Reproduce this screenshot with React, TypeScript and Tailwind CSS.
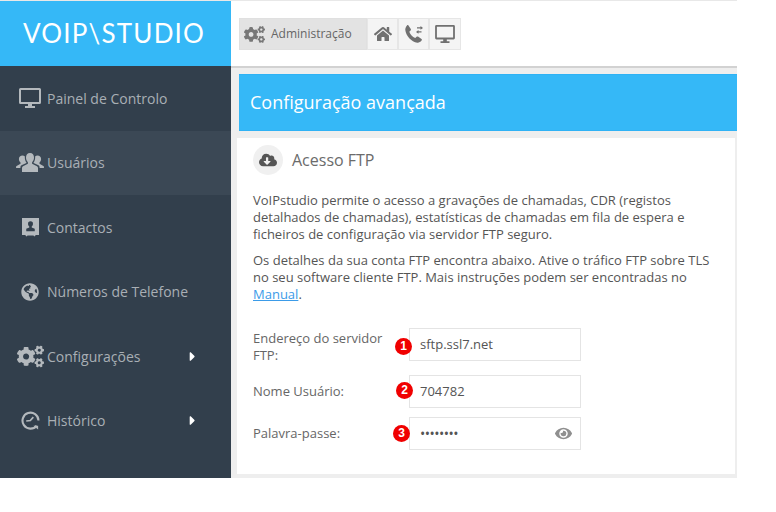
import { FaCogs, FaHome, FaGlobeAmericas, FaEye, FaCloudDownloadAlt, FaCaretRight } from "react-icons/fa";
import type { ReactNode } from "react";

function MonitorIcon({ className }: { className?: string }) {
  return (
    <svg viewBox="0 0 22 20" className={className} fill="currentColor">
      <path fillRule="evenodd" d="M1.5 0h19A1.5 1.5 0 0 1 22 1.5v13a1.5 1.5 0 0 1-1.5 1.5H13v2h3v2H6v-2h3v-2H1.5A1.5 1.5 0 0 1 0 14.5v-13A1.5 1.5 0 0 1 1.5 0zM2 2v12h18V2z" />
    </svg>
  );
}

function UsersIcon() {
  return (
    <svg viewBox="0 0 28 19" className="h-[19px] w-[28px]" fill="currentColor">
      <path d="M14 0c2.6 0 4 2 4 4.6 0 2-.8 3.6-1.9 4.6v1.6l4.9 2.5c.7.4 1 1 1 1.7V19H6v-4c0-.7.3-1.3 1-1.7l4.9-2.5V9.200C10.800 8.200 10 6.600 10 4.600 10 2 11.400 0 14 0z" />
      <path d="M6.500 2.500c1 0 1.800.4 2.400 1-.3 2 .2 4.300 1.500 6v.4L5.500 12.300C4.600 12.800 4.400 13.600 4.400 15H0l.2-1.800 4.300-2.400V9.600C3.500 8.700 2.900 7.500 2.900 6 2.900 3.900 4.400 2.500 6.500 2.500z" />
      <path d="M21.500 2.500c-1 0-1.800.4-2.400 1 .3 2-.2 4.300-1.500 6v.4l4.900 2.400c.9.500 1.100 1.300 1.100 2.700H28l-.2-1.800-4.300-2.400V9.600c1-.9 1.600-2.100 1.600-3.600 0-2.100-1.500-3.500-3.600-3.500z" />
    </svg>
  );
}

function ContactIcon() {
  return (
    <svg viewBox="0 0 18 20" className="h-[19px] w-[17px]" fill="currentColor">
      <path fillRule="evenodd" d="M0 0h18v18h-3.500l-1 1.600-1.500-1.200H6l-1.500 1.200-1-1.600H0zM9 3.500a2.600 2.600 0 0 0-2.600 2.800c0 1.200.6 2.100 1.300 2.600v1.200l-3.200 1.200V14h9v-2.700l-3.200-1.200V8.900c.7-.5 1.300-1.400 1.300-2.600A2.600 2.600 0 0 0 9 3.500z" />
    </svg>
  );
}

function HistoryIcon() {
  return (
    <svg viewBox="0 0 20 20" className="h-[19px] w-[19px]" fill="none" stroke="currentColor" strokeWidth="2.2">
      <path d="M16.500 15.500A8.400 8.400 0 1 1 18.400 10" />
      <path d="M5.500 10.500 9.800 10 13 6.500" strokeWidth="1.800" />
      <path d="M13 15.500h5v4z" fill="currentColor" stroke="none" />
    </svg>
  );
}

function PhoneArrowsIcon() {
  return (
    <svg viewBox="0 0 20 20" className="h-[20px] w-[20px]" fill="currentColor">
      <path d="M4.300 1.200 6.800 5c.3.500.2 1-.2 1.400L5.300 7.700c.9 2.600 3.200 5.100 5.900 6.300l1.400-1.300c.4-.4.900-.4 1.400-.1l3.500 2.500c.5.400.5 1 .1 1.500-1.200 1.500-2.700 2.400-4.300 2.200C7.400 18 1.800 11.700 1.300 6.100 1.100 4.300 1.900 2.700 3 1.400c.4-.5.900-.6 1.300-.2z" />
      <path d="M13 3.200h3.500V2l2.500 1.900-2.500 1.900V4.500H13zM17.500 7.200h-3V6L12 7.900l2.500 1.900V8.500h3z" />
    </svg>
  );
}

function NavItem({ icon, label, active, arrow }: { icon: ReactNode; label: string; active?: boolean; arrow?: boolean }) {
  return (
    <div className={`flex h-[64.5px] items-center whitespace-nowrap pl-[16px] text-[14px] text-[#a9afb5] ${active ? "bg-[#3b4855]" : ""}`}>
      <span className="flex w-[28px] shrink-0 items-center justify-center text-[#b4b9bd]">{icon}</span>
      <span className="ml-[3px] w-[138px]">{label}</span>
      {arrow && <FaCaretRight className="text-[15px] text-white" />}
    </div>
  );
}

function Badge({ n, className }: { n: number; className: string }) {
  return (
    <span className={`absolute flex h-[17px] w-[17px] items-center justify-center rounded-full bg-[#f00000] text-[12px] font-bold text-white [font-family:'Liberation_Sans',sans-serif] ${className}`}>
      {n}
    </span>
  );
}

function Field({ label, className, labelClassName, badge, children }: { label: ReactNode; className: string; labelClassName?: string; badge: ReactNode; children: ReactNode }) {
  return (
    <div className={`flex items-center ${className}`}>
      <div className={`w-[156px] ${labelClassName ?? ""}`}>{label}</div>
      <div className="relative flex h-[33px] w-[172px] items-center justify-between border border-[#e4e4e4] pl-[10px] pr-[8px] text-[#555555]">
        {badge}
        {children}
      </div>
    </div>
  );
}

export default function App() {
  return (
    <div className="h-[512px] w-[776px] overflow-hidden bg-white [font-family:'Open_Sans',sans-serif]">
      <div className="flex h-[478px] w-[737px] border-t border-t-[#e8e8e8]">
        <aside className="flex w-[231px] shrink-0 flex-col bg-[#323f4c]">
          <div className="flex h-[65px] items-center justify-center bg-[#35b8f7] pr-[3px] text-[26px] font-normal tracking-[1.2px] text-white [font-family:'Lato',sans-serif]">
            VOIP\STUDIO
          </div>
          <NavItem icon={<MonitorIcon className="h-[20px] w-[22px]" />} label="Painel de Controlo" />
          <NavItem icon={<UsersIcon />} label="Usuários" active />
          <NavItem icon={<ContactIcon />} label="Contactos" />
          <NavItem icon={<FaGlobeAmericas className="text-[18px]" />} label="Números de Telefone" />
          <NavItem icon={<FaCogs className="text-[27px]" />} label="Configurações" arrow />
          <NavItem icon={<HistoryIcon />} label="Histórico" arrow />
        </aside>
        <main className="flex min-w-0 flex-1 flex-col bg-[#eeeeee]">
          <div className="flex h-[67px] items-center border-b-2 border-b-[#d2d2d2] bg-white pl-[8px] pt-[1px]">
            <div className="flex h-[32px] w-[128px] items-center gap-[6px] border border-[#e0e0e0] bg-[#e3e3e3] pl-[4px] text-[12px] text-[#666666]">
              <FaCogs className="text-[21px] text-[#777777]" />
              <span>Administração</span>
            </div>
            <div className="flex h-[32px] w-[31px] items-center justify-center border border-[#e6e6e6] bg-[#f4f4f4] text-[#707070]"><FaHome className="text-[18px]" /></div>
            <div className="flex h-[32px] w-[31px] items-center justify-center border border-[#e6e6e6] bg-[#f4f4f4] text-[#707070]"><PhoneArrowsIcon /></div>
            <div className="flex h-[32px] w-[32px] items-center justify-center border border-[#e6e6e6] bg-[#f4f4f4] text-[#707070]"><MonitorIcon className="h-[18px] w-[20px]" /></div>
          </div>
          <div className="ml-[8px] mt-[6px] flex h-[57px] items-center border-y border-y-[#2fb2f5] bg-[#35b8f7] pl-[11px] text-[18px] text-white">
            Configuração avançada
          </div>
          <section className="ml-[6px] mr-[2px] mt-[7px] h-[336px] bg-white px-[16px] text-[13px] leading-[17px] text-[#666666]">
            <div className="flex items-center gap-[9px] pt-[7px]">
              <span className="flex h-[30px] w-[30px] items-center justify-center rounded-full bg-[#f0f0f0] text-[#555555]"><FaCloudDownloadAlt className="text-[18px]" /></span>
              <span className="text-[16px] text-[#6b6b6b]">Acesso FTP</span>
            </div>
            <p className="mt-[17px] text-[#555555]">
              VoIPstudio permite o acesso a gravações de chamadas, CDR (registos detalhados de chamadas), estatísticas de chamadas em fila de espera e ficheiros de configuração via servidor FTP seguro.
            </p>
            <p className="mt-[9px] text-[#555555]">
              Os detalhes da sua conta FTP encontra abaixo. Ative o tráfico FTP sobre TLS no seu software cliente FTP. Mais instruções podem ser encontradas no <span className="text-[#3b9be8] underline">Manual</span>.
            </p>
            <Field className="mt-[24px]" labelClassName="-mb-[3px] mt-[3px]" label={<>Endereço do servidor<br />FTP:</>} badge={<Badge n={1} className="-left-[15px] top-[9px]" />}>
              <span>sftp.ssl7.net</span>
            </Field>
            <Field className="mt-[14px]" label="Nome Usuário:" badge={<Badge n={2} className="-left-[14px] top-[6px]" />}>
              <span>704782</span>
            </Field>
            <Field className="mt-[9px]" label="Palavra-passe:" badge={<Badge n={3} className="-left-[17px] top-[7px]" />}>
              <span className="text-[14px] tracking-[-0.5px]">••••••••</span>
              <FaEye className="text-[17px] text-[#8f8f8f]" />
            </Field>
          </section>
        </main>
      </div>
    </div>
  );
}
